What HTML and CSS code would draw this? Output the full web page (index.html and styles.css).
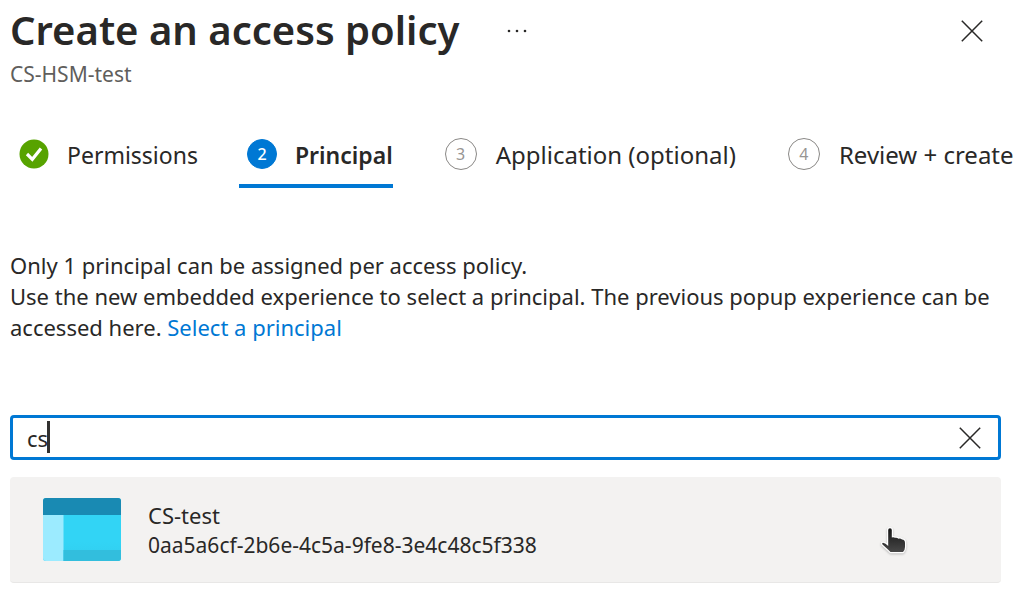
FILE: index.html
```
<!DOCTYPE html>
<html lang="en">
<head>
<meta charset="utf-8">
<title>Create an access policy</title>
<link rel="stylesheet" href="styles.css">
</head>
<body>
<header class="header">
  <div class="title-row">
    <h1 class="title">Create an access policy</h1>
    <button class="icon-button more" type="button" aria-label="More options">
      <svg width="20" height="6" viewBox="0 0 20 6" fill="#292827"><circle cx="2" cy="3" r="1.3"/><circle cx="10" cy="3" r="1.3"/><circle cx="18" cy="3" r="1.3"/></svg>
    </button>
    <button class="icon-button close" type="button" aria-label="Close">
      <svg width="22" height="22" viewBox="0 0 22 22" stroke="#292827" stroke-width="1.5"><path d="M.8.8 21.2 21.2M21.2.8.8 21.2"/></svg>
    </button>
  </div>
  <p class="subtitle">CS-HSM-test</p>
</header>
<nav class="steps" aria-label="Steps">
  <button class="step step-first" type="button">
    <svg class="badge-done" width="30" height="30" viewBox="0 0 30 30"><circle cx="15" cy="15" r="14.5" fill="#57a300"/><path d="m8 15 5.300 5.300L22 9.500" fill="none" stroke="#fff" stroke-width="3.200"/></svg>
    <span class="label">Permissions</span>
  </button>
  <button class="step step-current" type="button" aria-current="step"><span class="badge badge-current">2</span><span class="label">Principal</span></button>
  <button class="step step-upcoming" type="button"><span class="badge">3</span><span class="label">Application (optional)</span></button>
  <button class="step step-upcoming" type="button"><span class="badge">4</span><span class="label">Review + create</span></button>
</nav>
<main class="content">
  <p class="intro">Only 1 principal can be assigned per access policy.<br>Use the new embedded experience to select a principal. The previous popup experience can be accessed here. <a class="link" href="#">Select a principal</a></p>
  <div class="search">
    <input class="search-input" type="text" value="cs" aria-label="Search principals">
    <span class="caret"></span>
    <button class="icon-button" type="button" aria-label="Clear search">
      <svg width="22" height="22" viewBox="0 0 22 22" stroke="#292827" stroke-width="1.5"><path d="M.8.8 21.2 21.2M21.2.8.8 21.2"/></svg>
    </button>
  </div>
  <button class="result" type="button">
    <svg width="78" height="63" viewBox="0 0 78 63">
      <defs>
        <linearGradient id="pane" x2="0" y2="1"><stop offset=".7" stop-color="#32d4f5"/><stop offset="1" stop-color="#31cced"/></linearGradient>
        <clipPath id="frame"><rect width="78" height="63" rx="3"/></clipPath>
      </defs>
      <g clip-path="url(#frame)"><rect width="78" height="63" fill="url(#pane)"/><rect y="17" width="20.500" height="46" fill="#9cebff"/><rect x="20.500" y="52" width="57.500" height="11" fill="#32bedd"/><rect width="78" height="17" fill="#198ab3"/></g>
    </svg>
    <span class="result-text"><span>CS-test</span><span class="result-id">0aa5a6cf-2b6e-4c5a-9fe8-3e4c48c5f338</span></span>
    <svg class="pointer" width="28" height="30" viewBox="0 0 28 30">
      <defs><linearGradient id="hand" x2="0" y2="1"><stop stop-color="#151515"/><stop offset="1" stop-color="#484848"/></linearGradient></defs>
      <path d="M8.200 4Q8.200 2.300 10 2.300Q11.800 2.300 11.800 4V11.500Q13.500 10.800 15 11.800Q17 11.300 18.500 12.700Q20.500 12 22 13.500Q25 13.500 25 17V21Q25 24 23 26H10.500L8 23.500L2.500 18.500Q1.500 17 3 16.700Q5.500 17 8.200 20Z" fill="url(#hand)" stroke="#fff" stroke-width="2.400" stroke-linejoin="round" paint-order="stroke"/>
    </svg>
  </button>
</main>
</body>
</html>
```
FILE: styles.css
```
* { box-sizing: border-box; }
body {
  margin: 0;
  padding: 0 20px 16px 10px;
  background: #fff;
  color: #292827;
  font: 22px/32px "Noto Sans", "Open Sans", sans-serif;
}
button { font: inherit; color: inherit; background: none; border: 0; padding: 0; margin: 0; cursor: pointer; }
svg { display: block; flex: none; }
.title-row { display: flex; align-items: center; height: 62px; }
.title { margin: 0; padding-bottom: 2px; font-size: 40px; line-height: 56px; font-weight: 600; white-space: nowrap; }
.icon-button { display: flex; flex: none; }
.more { margin-left: 48px; }
.close { margin: 0 18px 0 auto; }
.subtitle { margin: 0; color: #605e5c; font-size: 21px; line-height: 24px; }
.steps { display: flex; align-items: flex-start; margin-top: 37px; white-space: nowrap; }
.step { display: flex; flex: none; align-items: center; height: 65px; padding-bottom: 4px; font-size: 23px; }
.label { padding-top: 3px; }
.step-first { padding-left: 9px; }
.badge-done { margin-right: 18px; }
.badge { display: flex; align-items: center; justify-content: center; width: 32px; height: 32px; margin-right: 19px; border: 1px solid #8a8886; border-radius: 50%; color: #979593; font-size: 16px; line-height: 20px; }
.badge-current { width: 30px; height: 30px; margin-right: 18px; border-color: #0078d4; background: #0078d4; color: #fff; font-weight: 500; }
.step-current { margin-left: 41px; padding: 0 0 0 8px; border-bottom: 4px solid #0078d4; font-weight: 600; }
.step-upcoming { margin-left: 52px; font-size: 24px; }
.intro { margin: 62px 0 0; line-height: 31px; }
.link { color: #0078d4; text-decoration: none; }
.search { position: relative; display: flex; align-items: center; height: 45px; margin-top: 72px; padding: 0 17px 0 14px; border: 3px solid #0078d4; border-radius: 4px; }
.search-input { flex: 1; min-width: 0; padding: 0; border: 0; outline: 0; background: none; color: inherit; font: inherit; }
.caret { position: absolute; left: 34px; top: 3px; width: 3px; height: 32px; background: #323130; }
.result { display: flex; align-items: center; width: 100%; height: 106px; margin-top: 17px; padding: 0 93px 0 33px; border-bottom: 1px solid #e8e7e6; border-radius: 4px; background: #f3f2f1; text-align: left; }
.result-text { display: flex; flex-direction: column; margin-left: 27px; line-height: 30px; }
.result-id { font-size: 21px; }
.pointer { margin: 22px 0 0 auto; filter: drop-shadow(0 1px 1px #8888); }
```
